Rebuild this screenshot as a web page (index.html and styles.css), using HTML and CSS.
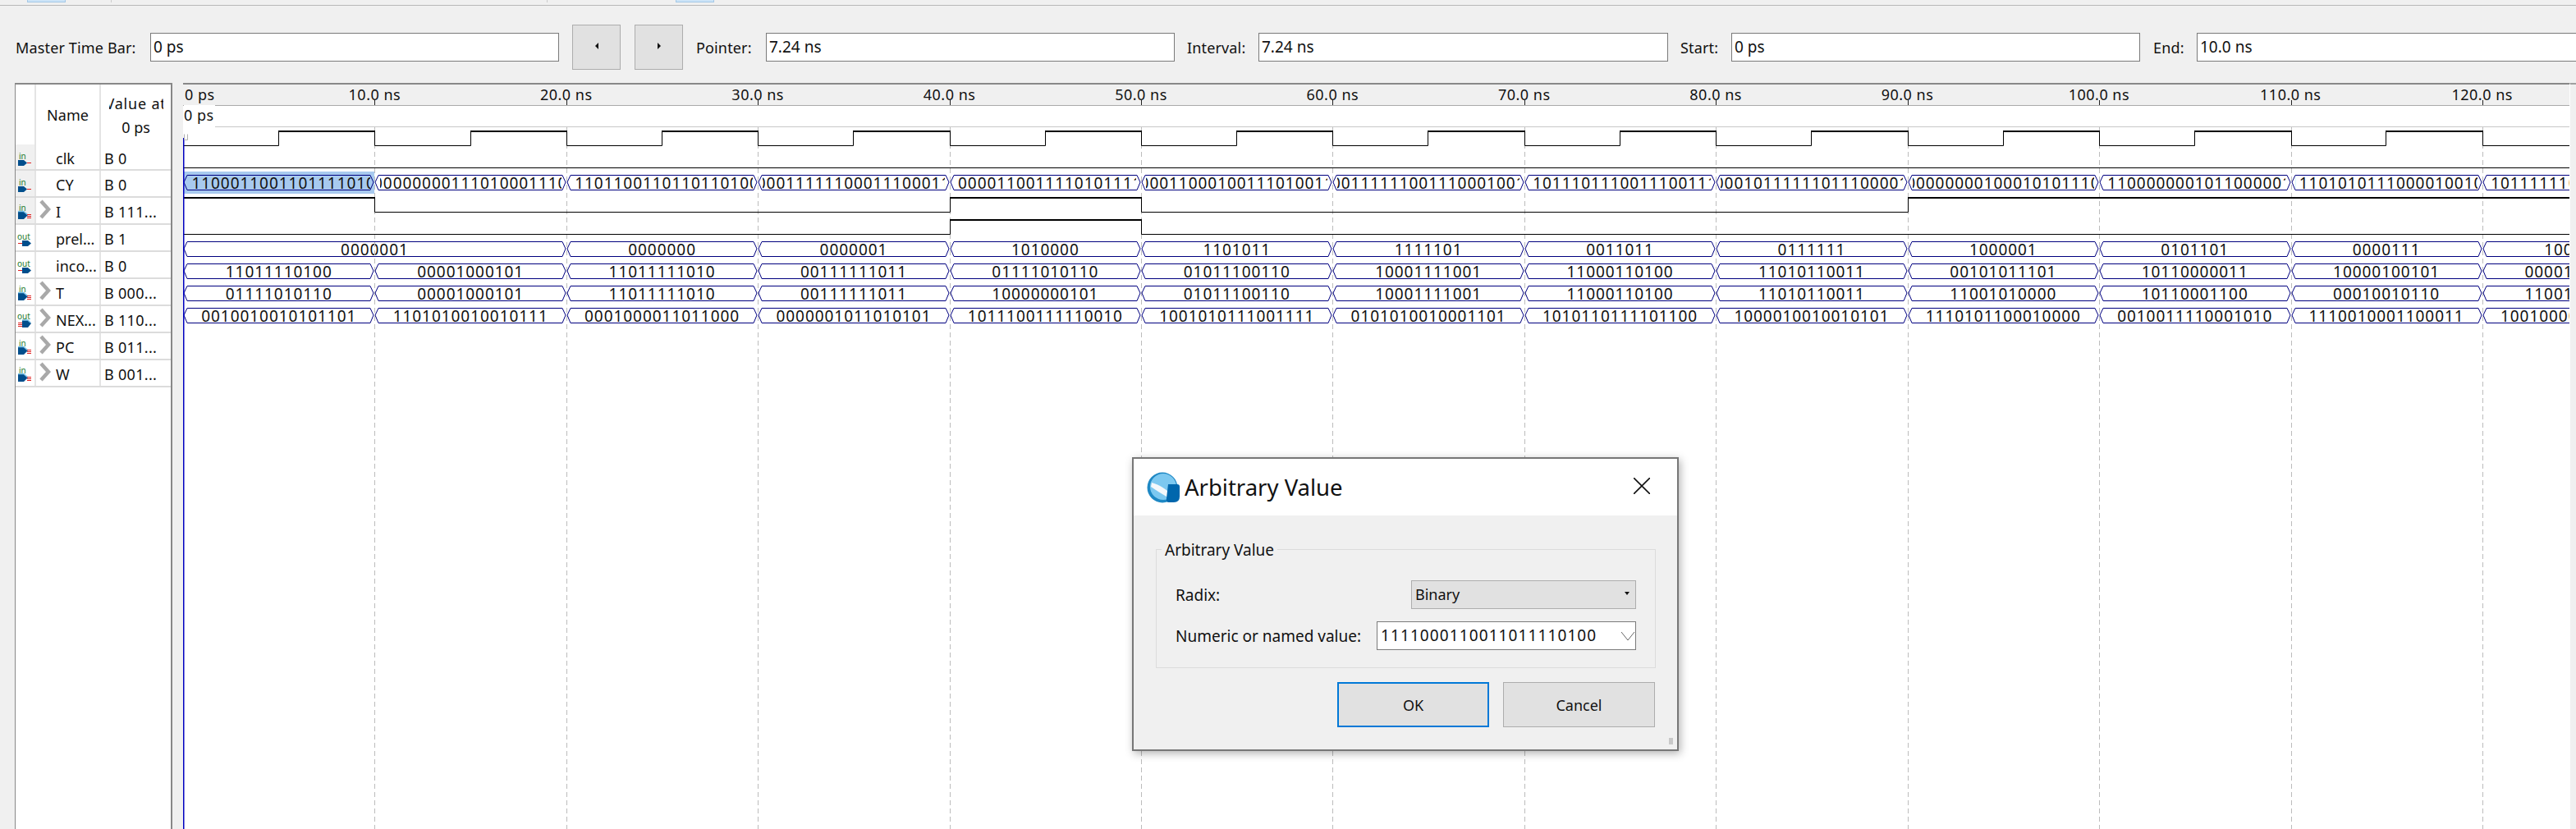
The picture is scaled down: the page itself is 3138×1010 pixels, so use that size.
FILE: index.html
```html
<!DOCTYPE html>
<html lang="en">
<head>
  <meta charset="UTF-8">
  <title>Simulation Waveform Editor</title>
  <link rel="stylesheet" href="styles.css">
</head>
<body>
  <svg class="defs">
    <defs>
      <symbol id="pin-in" viewBox="0 0 24 24">
        <text x="2" y="10" class="pin-text">in</text>
        <path d="M1 11H8L12 14.5L8 18H1Z" fill="#004e8c"/>
        <path d="M12 14.5H17" stroke="#e02020" fill="none"/>
      </symbol>
      <symbol id="pin-out" viewBox="0 0 24 24">
        <text x="0" y="10" class="pin-text">out</text>
        <path d="M6 11H13L17 14.5L13 18H6Z" fill="#004e8c"/>
        <path d="M1 14.5H6" stroke="#e02020" fill="none"/>
      </symbol>
      <symbol id="bus-in" viewBox="0 0 24 24">
        <text x="2" y="8" class="pin-text">in</text>
        <path d="M1 9H8L13 13L8 18H1Z" fill="#004e8c"/>
        <path d="M1 8.5H8L13 13" stroke="#7cc4ea" stroke-width="1.5" fill="none"/>
        <path d="M12 12.5H17M12 14.5H17M12 16.5H17" stroke="#e02020" fill="none"/>
      </symbol>
      <symbol id="bus-out" viewBox="0 0 24 24">
        <text x="0" y="8" class="pin-text">out</text>
        <path d="M6 9H13L17 13L13 18H6Z" fill="#004e8c"/>
        <path d="M6 9H13L16 12" stroke="#7cc4ea" stroke-width="1.5" fill="none"/>
        <path d="M1 12.5H6M1 14.5H6M1 16.5H6" stroke="#e02020" fill="none"/>
      </symbol>
      <symbol id="chevron" viewBox="0 0 15 24">
        <path d="M3 2L12 12L3 22" stroke="#a9a9a9" stroke-width="4.5" fill="none"/>
      </symbol>
    </defs>
  </svg>

  <div class="top-strip">
    <div class="tab-mark tab-one"></div>
    <div class="strip-tick tick-one"></div>
    <div class="strip-tick tick-two"></div>
    <div class="tab-mark tab-two"></div>
  </div>

  <div class="toolbar">
    <label class="tool-label label-master">Master Time Bar:</label>
    <div class="tool-input input-master">0 ps</div>
    <div class="step-btn step-prev"><span class="arrow-left"></span></div>
    <div class="step-btn step-next"><span class="arrow-right"></span></div>
    <label class="tool-label label-pointer">Pointer:</label>
    <div class="tool-input input-pointer">7.24 ns</div>
    <label class="tool-label label-interval">Interval:</label>
    <div class="tool-input input-interval">7.24 ns</div>
    <label class="tool-label label-start">Start:</label>
    <div class="tool-input input-start">0 ps</div>
    <label class="tool-label label-end">End:</label>
    <div class="tool-input input-end">10.0 ns</div>
  </div>

  <div class="main">
    <div class="signals">
      <div class="signal-head">
        <div class="cell-icon"></div>
        <div class="head-name">Name</div>
        <div class="head-value">
          <span class="head-clip">Value at</span>
          <span>0 ps</span>
        </div>
      </div>
      <div class="signal-row">
        <div class="cell-icon shaded"><svg class="pin"><use href="#pin-in"/></svg></div>
        <div class="cell-name"><span class="no-chevron"></span>clk</div>
        <div class="cell-value">B 0</div>
      </div>
      <div class="signal-row">
        <div class="cell-icon shaded"><svg class="pin"><use href="#pin-in"/></svg></div>
        <div class="cell-name"><span class="no-chevron"></span>CY</div>
        <div class="cell-value">B 0</div>
      </div>
      <div class="signal-row">
        <div class="cell-icon shaded"><svg class="pin"><use href="#bus-in"/></svg></div>
        <div class="cell-name"><svg class="expand"><use href="#chevron"/></svg>I</div>
        <div class="cell-value">B 111...</div>
      </div>
      <div class="signal-row">
        <div class="cell-icon"><svg class="pin"><use href="#pin-out"/></svg></div>
        <div class="cell-name"><span class="no-chevron"></span>prel...</div>
        <div class="cell-value">B 1</div>
      </div>
      <div class="signal-row">
        <div class="cell-icon"><svg class="pin"><use href="#pin-out"/></svg></div>
        <div class="cell-name"><span class="no-chevron"></span>inco...</div>
        <div class="cell-value">B 0</div>
      </div>
      <div class="signal-row">
        <div class="cell-icon"><svg class="pin"><use href="#bus-in"/></svg></div>
        <div class="cell-name"><svg class="expand"><use href="#chevron"/></svg>T</div>
        <div class="cell-value">B 000...</div>
      </div>
      <div class="signal-row">
        <div class="cell-icon"><svg class="pin"><use href="#bus-out"/></svg></div>
        <div class="cell-name"><svg class="expand"><use href="#chevron"/></svg>NEX...</div>
        <div class="cell-value">B 110...</div>
      </div>
      <div class="signal-row">
        <div class="cell-icon"><svg class="pin"><use href="#bus-in"/></svg></div>
        <div class="cell-name"><svg class="expand"><use href="#chevron"/></svg>PC</div>
        <div class="cell-value">B 011...</div>
      </div>
      <div class="signal-row">
        <div class="cell-icon"><svg class="pin"><use href="#bus-in"/></svg></div>
        <div class="cell-name"><svg class="expand"><use href="#chevron"/></svg>W</div>
        <div class="cell-value">B 001...</div>
      </div>
    </div>

    <div class="wave">
      <div class="ruler">
        <span class="ruler-first">0 ps</span>
        <span>10.0 ns</span><span>20.0 ns</span><span>30.0 ns</span><span>40.0 ns</span>
        <span>50.0 ns</span><span>60.0 ns</span><span>70.0 ns</span><span>80.0 ns</span>
        <span>90.0 ns</span><span>100.0 ns</span><span>110.0 ns</span><span>120.0 ns</span>
      </div>
      <div class="cursor-row"><span class="cursor-label">0 ps</span></div>

      <div class="track"></div>
      <div class="track"></div>
      <div class="track bus-track selected-first">
        <div class="seg"><span>1111000110011011110100</span></div>
        <div class="seg"><span>0000000001110100011100</span></div>
        <div class="seg"><span>0111011001101101101000</span></div>
        <div class="seg"><span>0000111111000111000110</span></div>
        <div class="seg"><span>1100001100111101011110</span></div>
        <div class="seg"><span>0000110001001110100110</span></div>
        <div class="seg"><span>1001111110011100010010</span></div>
        <div class="seg"><span>1110111011100111001110</span></div>
        <div class="seg"><span>0000101111110111000010</span></div>
        <div class="seg"><span>1000000001000101011100</span></div>
        <div class="seg"><span>0111000000010110000010</span></div>
        <div class="seg"><span>0111010101110000100100</span></div>
        <div class="seg"><span>1110111111010011010100</span></div>
      </div>
      <div class="track"></div>
      <div class="track"></div>
      <div class="track bus-track">
        <div class="seg seg-wide"><span>0000001</span></div>
        <div class="seg"><span>0000000</span></div>
        <div class="seg"><span>0000001</span></div>
        <div class="seg"><span>1010000</span></div>
        <div class="seg"><span>1101011</span></div>
        <div class="seg"><span>1111101</span></div>
        <div class="seg"><span>0011011</span></div>
        <div class="seg"><span>0111111</span></div>
        <div class="seg"><span>1000001</span></div>
        <div class="seg"><span>0101101</span></div>
        <div class="seg"><span>0000111</span></div>
        <div class="seg"><span>1000011</span></div>
      </div>
      <div class="track bus-track">
        <div class="seg"><span>11011110100</span></div>
        <div class="seg"><span>00001000101</span></div>
        <div class="seg"><span>11011111010</span></div>
        <div class="seg"><span>00111111011</span></div>
        <div class="seg"><span>01111010110</span></div>
        <div class="seg"><span>01011100110</span></div>
        <div class="seg"><span>10001111001</span></div>
        <div class="seg"><span>11000110100</span></div>
        <div class="seg"><span>11010110011</span></div>
        <div class="seg"><span>00101011101</span></div>
        <div class="seg"><span>10110000011</span></div>
        <div class="seg"><span>10000100101</span></div>
        <div class="seg"><span>00001000101</span></div>
      </div>
      <div class="track bus-track">
        <div class="seg"><span>01111010110</span></div>
        <div class="seg"><span>00001000101</span></div>
        <div class="seg"><span>11011111010</span></div>
        <div class="seg"><span>00111111011</span></div>
        <div class="seg"><span>10000000101</span></div>
        <div class="seg"><span>01011100110</span></div>
        <div class="seg"><span>10001111001</span></div>
        <div class="seg"><span>11000110100</span></div>
        <div class="seg"><span>11010110011</span></div>
        <div class="seg"><span>11001010000</span></div>
        <div class="seg"><span>10110001100</span></div>
        <div class="seg"><span>00010010110</span></div>
        <div class="seg"><span>11001010000</span></div>
      </div>
      <div class="track bus-track">
        <div class="seg"><span>0010010010101101</span></div>
        <div class="seg"><span>1101010010010111</span></div>
        <div class="seg"><span>0001000011011000</span></div>
        <div class="seg"><span>0000001011010101</span></div>
        <div class="seg"><span>1011100111110010</span></div>
        <div class="seg"><span>1001010111001111</span></div>
        <div class="seg"><span>0101010010001101</span></div>
        <div class="seg"><span>1010110111101100</span></div>
        <div class="seg"><span>1000010010010101</span></div>
        <div class="seg"><span>1110101100010000</span></div>
        <div class="seg"><span>0010011110001010</span></div>
        <div class="seg"><span>1110010001100011</span></div>
        <div class="seg"><span>1001000011010011</span></div>
      </div>

      <!-- the traces, in page coordinates -->
      <svg class="wave-art" viewBox="223 101 2907 909" width="2907" height="909">
        <defs>
          <path id="bus" d="M224 9L228 .5H451L455 9L451 18.5H228ZM457 9L461 .5H685L689 9L685 18.5H461ZM691 9L695 .5H918L922 9L918 18.5H695ZM924 9L928 .5H1152L1156 9L1152 18.5H928ZM1158 9L1162 .5H1385L1389 9L1385 18.5H1162ZM1391 9L1395 .5H1618L1622 9L1618 18.5H1395ZM1624 9L1628 .5H1852L1856 9L1852 18.5H1628ZM1858 9L1862 .5H2085L2089 9L2085 18.5H1862ZM2091 9L2095 .5H2319L2323 9L2319 18.5H2095ZM2325 9L2329 .5H2552L2556 9L2552 18.5H2329ZM2558 9L2562 .5H2786L2790 9L2786 18.5H2562ZM2792 9L2796 .5H3019L3023 9L3019 18.5H2796ZM3025 9L3029 .5H3254L3258 9L3254 18.5H3029Z"/>
          <path id="bus-wide" d="M224 9L228 .5H685L689 9L685 18.5H228ZM691 9L695 .5H918L922 9L918 18.5H695ZM924 9L928 .5H1152L1156 9L1152 18.5H928ZM1158 9L1162 .5H1385L1389 9L1385 18.5H1162ZM1391 9L1395 .5H1618L1622 9L1618 18.5H1395ZM1624 9L1628 .5H1852L1856 9L1852 18.5H1628ZM1858 9L1862 .5H2085L2089 9L2085 18.5H1862ZM2091 9L2095 .5H2319L2323 9L2319 18.5H2095ZM2325 9L2329 .5H2552L2556 9L2552 18.5H2329ZM2558 9L2562 .5H2786L2790 9L2786 18.5H2562ZM2792 9L2796 .5H3019L3023 9L3019 18.5H2796ZM3025 9L3029 .5H3254L3258 9L3254 18.5H3029Z"/>
        </defs>
        <!-- grid -->
        <path class="grid" d="M456.5 155V1010M690.5 155V1010M923.5 155V1010M1157.5 155V1010M1390.5 155V1010M1623.5 155V1010M1857.5 155V1010M2090.5 155V1010M2324.5 155V1010M2557.5 155V1010M2791.5 155V1010M3024.5 155V1010"/>
        <path class="ticks" d="M456.5 122V128M690.5 122V128M923.5 122V128M1157.5 122V128M1390.5 122V128M1623.5 122V128M1857.5 122V128M2090.5 122V128M2324.5 122V128M2557.5 122V128M2791.5 122V128M3024.5 122V128"/>
        <!-- clk -->
        <path class="low" d="M224 177.5H339.5V160M456.5 160V177.5H573.5V160M690.5 160V177.5H806.5V160M923.5 160V177.5H1039.5V160M1157.5 160V177.5H1273.5V160M1390.5 160V177.5H1506.5V160M1623.5 160V177.5H1739.5V160M1857.5 160V177.5H1973.5V160M2090.5 160V177.5H2206.5V160M2324.5 160V177.5H2440.5V160M2557.5 160V177.5H2673.5V160M2791.5 160V177.5H2906.5V160M3024.5 160V177.5H3130"/>
        <path class="high" d="M339 160H457M573 160H691M806 160H924M1039 160H1158M1273 160H1391M1506 160H1624M1739 160H1858M1973 160H2091M2206 160H2325M2440 160H2558M2673 160H2792M2906 160H3025"/>
        <!-- CY -->
        <path class="low" d="M224 204.5H3130"/>
        <!-- prel -->
        <path class="low" d="M456.5 241V258.5H1157.5V241M1390.5 241V258.5H2324.5V241"/>
        <path class="high" d="M224 241H457M1157 241H1391M2324 241H3130"/>
        <!-- inco -->
        <path class="low" d="M224 285.5H1157.5V268M1390.5 268V285.5H3130"/>
        <path class="high" d="M1157 268H1391"/>
        <!-- buses -->
        <use href="#bus" y="213" class="bus-line"/>
        <use href="#bus-wide" y="294" class="bus-line"/>
        <use href="#bus" y="321" class="bus-line"/>
        <use href="#bus" y="348" class="bus-line"/>
        <use href="#bus" y="375" class="bus-line"/>
        <!-- master time bar -->
        <path class="master-bar" d="M223.75 168V1010"/>
        <path class="master-mark" d="M224.5 163.5V170.5H228.5V163.5"/>
      </svg>
    </div>
    <div class="wave-edge"></div>
  </div>

  <div class="dialog">
    <div class="dialog-title">
      <svg class="dialog-logo" viewBox="0 0 40 40">
        <circle cx="19" cy="20" r="18.5" fill="#1e88c4"/>
        <circle cx="20" cy="19" r="16" fill="#7cc8f0"/>
        <path d="M6 14C14 16 24 22 32 30L27 33C19 28 11 23 5 19Z" fill="#f4f8fb"/>
        <path d="M26 16H37Q40 16 40 19V31Q40 38 33 38H27Q23 38 24 33Z" fill="#0067ad"/>
      </svg>
      <span class="dialog-name">Arbitrary Value</span>
      <svg class="dialog-close" viewBox="0 0 20 20">
        <path d="M0 0L20 20M20 0L0 20" stroke="#111" stroke-width="1.6" fill="none"/>
      </svg>
    </div>
    <div class="dialog-body">
      <div class="group">
        <span class="group-legend">Arbitrary Value</span>
        <div class="form-row form-radix">
          <span>Radix:</span>
          <div class="combo">Binary<span class="combo-arrow"></span></div>
        </div>
        <div class="form-row">
          <span>Numeric or named value:</span>
          <div class="value-box">1111000110011011110100
            <svg class="value-drop" viewBox="0 0 18 12"><path d="M1 1L9 11L17 1" stroke="#666" fill="none"/></svg>
          </div>
        </div>
      </div>
      <div class="dialog-buttons">
        <div class="btn btn-ok">OK</div>
        <div class="btn">Cancel</div>
      </div>
      <div class="grip"></div>
    </div>
  </div>
</body>
</html>
```
FILE: styles.css
```css
html, body {
  margin: 0;
  height: 1010px;
  overflow: hidden;
}
body {
  font-family: "Noto Sans", sans-serif;
  font-size: 18px;
  color: #111;
  background-color: #f0f0f0;
  display: flex;
  flex-direction: column;
}
.defs {
  width: 0;
  height: 0;
  display: block;
}
.pin-text {
  font-family: "Noto Sans", sans-serif;
  font-size: 10px;
  fill: #1c7a2c;
}

/* top strip */
.top-strip {
  height: 6px;
  border-bottom: 1px solid #b9b9b9;
  display: flex;
  align-items: flex-start;
}
.tab-mark {
  width: 45px;
  height: 2px;
  background-color: #cce4f7;
  border: 1px solid #a5c8e6;
  border-top: none;
}
.tab-one { margin-left: 33px; }
.tab-two { margin-left: 156px; }
.strip-tick {
  width: 1px;
  height: 3px;
  background-color: #ccc;
}
.tick-one { margin-left: 55px; }
.tick-two { margin-left: 530px; }

/* toolbar */
.toolbar {
  height: 87px;
  padding-top: 7px;
  padding-left: 19px;
  display: flex;
  align-items: center;
}
.tool-label { letter-spacing: 0.15px; }
.label-master { width: 164px; }
.label-pointer { width: 85px; margin-left: 16px; }
.label-interval { width: 87px; margin-left: 15px; }
.label-start { width: 62px; margin-left: 15px; }
.label-end { width: 53px; margin-left: 16px; }
.tool-input {
  box-sizing: border-box;
  height: 35px;
  line-height: 33px;
  padding-left: 3px;
  font-size: 19px;
  background-color: #fff;
  border: 1px solid #7a7a7a;
}
.input-master { width: 498px; }
.input-pointer { width: 498px; }
.input-interval { width: 499px; }
.input-start { width: 498px; }
.input-end { flex: 1; margin-right: -2px; }
.step-btn {
  box-sizing: border-box;
  width: 59px;
  height: 55px;
  background-color: #e1e1e1;
  border: 1px solid #adadad;
  display: flex;
  align-items: center;
  justify-content: center;
}
.step-prev { margin-left: 16px; }
.step-next { margin-left: 17px; }
.arrow-left {
  border-top: 4px solid transparent;
  border-bottom: 4px solid transparent;
  border-right: 4px solid #111;
  margin-bottom: 3px;
}
.arrow-right {
  border-top: 4px solid transparent;
  border-bottom: 4px solid transparent;
  border-left: 4px solid #111;
  margin-bottom: 3px;
}

/* main area */
.main {
  flex: 1;
  display: flex;
  padding-left: 18px;
  min-height: 0;
}
.signals {
  box-sizing: border-box;
  width: 192px;
  background-color: #fff;
  border-top: 2px solid #888;
  border-left: 1px solid #888;
  border-right: 2px solid #888;
}
.signal-head {
  height: 73px;
  display: flex;
}
.signal-row {
  height: 33px;
  box-sizing: border-box;
  display: flex;
  border-bottom: 2px solid #dcdcdc;
}
.signal-row:nth-child(2) { height: 32px; }
.cell-icon {
  box-sizing: border-box;
  width: 25px;
  border-right: 2px solid #e4e4e4;
  padding-left: 2px;
  padding-top: 8px;
}
.cell-icon.shaded { background-color: #f0f0f0; }
.pin {
  width: 24px;
  height: 24px;
  display: block;
}
.head-name {
  box-sizing: border-box;
  width: 79px;
  border-right: 2px solid #e4e4e4;
  display: flex;
  align-items: center;
  justify-content: center;
}
.head-value {
  width: 85px;
  display: flex;
  flex-direction: column;
  align-items: center;
  justify-content: center;
  gap: 7px;
  line-height: 22px;
  padding-top: 2px;
}
.head-clip {
  width: 66px;
  overflow: hidden;
  white-space: nowrap;
  display: flex;
  justify-content: center;
  letter-spacing: 0.8px;
}
.cell-name {
  box-sizing: border-box;
  width: 79px;
  border-right: 2px solid #e4e4e4;
  display: flex;
  align-items: center;
  padding-left: 3px;
  padding-top: 3px;
  white-space: nowrap;
}
.no-chevron, .expand {
  width: 15px;
  height: 24px;
  margin-right: 6px;
  flex-shrink: 0;
}
.expand { margin-top: -6px; }
.cell-value {
  padding-left: 4px;
  padding-top: 3px;
  display: flex;
  align-items: center;
  letter-spacing: 0.3px;
  white-space: nowrap;
}

/* waveform */
.wave {
  position: relative;
  width: 2907px;
  margin-left: 13px;
  background-color: #fff;
  border-top: 2px solid #888;
  overflow: hidden;
}
.wave-art {
  position: absolute;
  top: -2px;
  left: 0;
}
.wave-edge {
  width: 7px;
  border-top: 2px solid #a0a0a0;
  border-left: 1px solid #fff;
}
.ruler {
  box-sizing: border-box;
  height: 26px;
  width: 3000px;
  background-color: #f0f0f0;
  border-bottom: 1px solid #aaa;
  display: grid;
  grid-template-columns: 116.7px repeat(12, 233.4px);
  text-align: center;
  line-height: 25px;
  letter-spacing: 0.5px;
}
.ruler-first {
  text-align: left;
  padding-left: 2px;
}
.cursor-row {
  height: 25px;
  border-bottom: 1px solid #c8c8c8;
  margin-left: 39px;
  position: relative;
  line-height: 24px;
}
.cursor-label {
  position: absolute;
  left: -38px;
  top: -1px;
  width: 38px;
  height: 26px;
  background-color: #fff;
  letter-spacing: 0.5px;
}
.track { height: 27px; }
.bus-track {
  width: 3200px;
  display: grid;
  grid-template-columns: 233.5px repeat(12, 233.4px);
}
.selected-first {
  background: linear-gradient(#a8caef, #a8caef) 1px 0 / 232px 100% no-repeat;
}
.seg {
  margin: 0 6px;
  overflow: hidden;
  display: flex;
  justify-content: center;
  font-size: 19px;
  letter-spacing: 0.95px;
  line-height: 29px;
  white-space: nowrap;
}
.seg-wide { grid-column: span 2; }
.grid {
  stroke: #bcbcbc;
  stroke-dasharray: 6 4;
  fill: none;
}
.ticks { stroke: #222; fill: none; }
.low { stroke: #000; stroke-width: 1; fill: none; }
.high { stroke: #000; stroke-width: 2; fill: none; }
.bus-line { stroke: #00007f; stroke-width: 1; fill: none; }
.master-bar { stroke: #0000c0; stroke-width: 1.5; fill: none; }
.master-mark { stroke: #b0b0b0; fill: none; }

/* dialog */
.dialog {
  position: absolute;
  left: 1379px;
  top: 557px;
  width: 666px;
  height: 358px;
  box-sizing: border-box;
  border: 2px solid #777;
  background-color: #f0f0f0;
  box-shadow: 2px 3px 10px rgba(0, 0, 0, 0.3);
  display: flex;
  flex-direction: column;
}
.dialog-title {
  height: 69px;
  background-color: #fff;
  display: flex;
  align-items: center;
  padding-left: 16px;
  padding-right: 33px;
}
.dialog-logo {
  width: 40px;
  height: 40px;
  margin-right: 6px;
}
.dialog-name {
  font-size: 27.5px;
  flex: 1;
}
.dialog-close {
  width: 20px;
  height: 20px;
  margin-bottom: 4px;
}
.dialog-body {
  flex: 1;
  position: relative;
  padding: 41px 26px 0 27px;
}
.group {
  box-sizing: border-box;
  position: relative;
  height: 145px;
  border: 1px solid #dcdcdc;
  padding: 37px 23px 0 23px;
  font-size: 19px;
}
.group-legend {
  position: absolute;
  left: 6px;
  top: -13px;
  padding: 0 4px;
  background-color: #f0f0f0;
}
.form-row {
  display: flex;
  align-items: center;
  justify-content: space-between;
  height: 35px;
}
.form-radix { margin-bottom: 15px; }
.combo {
  box-sizing: border-box;
  width: 274px;
  height: 35px;
  padding-left: 4px;
  line-height: 33px;
  font-size: 18px;
  background-color: #e1e1e1;
  border: 1px solid #adadad;
  position: relative;
}
.combo-arrow {
  position: absolute;
  right: 7px;
  top: 13px;
  border-top: 4px solid #111;
  border-left: 3px solid transparent;
  border-right: 3px solid transparent;
}
.value-box {
  box-sizing: border-box;
  width: 316px;
  height: 35px;
  padding-left: 4px;
  line-height: 33px;
  background-color: #fff;
  border: 1px solid #7a7a7a;
  position: relative;
  font-size: 19px;
  letter-spacing: 1.1px;
}
.value-drop {
  position: absolute;
  right: 0;
  top: 11px;
  width: 18px;
  height: 12px;
}
.dialog-buttons {
  display: flex;
  justify-content: flex-end;
  gap: 17px;
  margin-top: 17px;
  margin-right: 1px;
}
.btn {
  box-sizing: border-box;
  width: 185px;
  height: 55px;
  background-color: #e1e1e1;
  border: 1px solid #adadad;
  display: flex;
  align-items: center;
  justify-content: center;
}
.btn-ok { border: 2px solid #0078d7; }
.grip {
  position: absolute;
  right: 5px;
  bottom: 6px;
  width: 5px;
  height: 8px;
  background-color: #c8c8c8;
}
```
